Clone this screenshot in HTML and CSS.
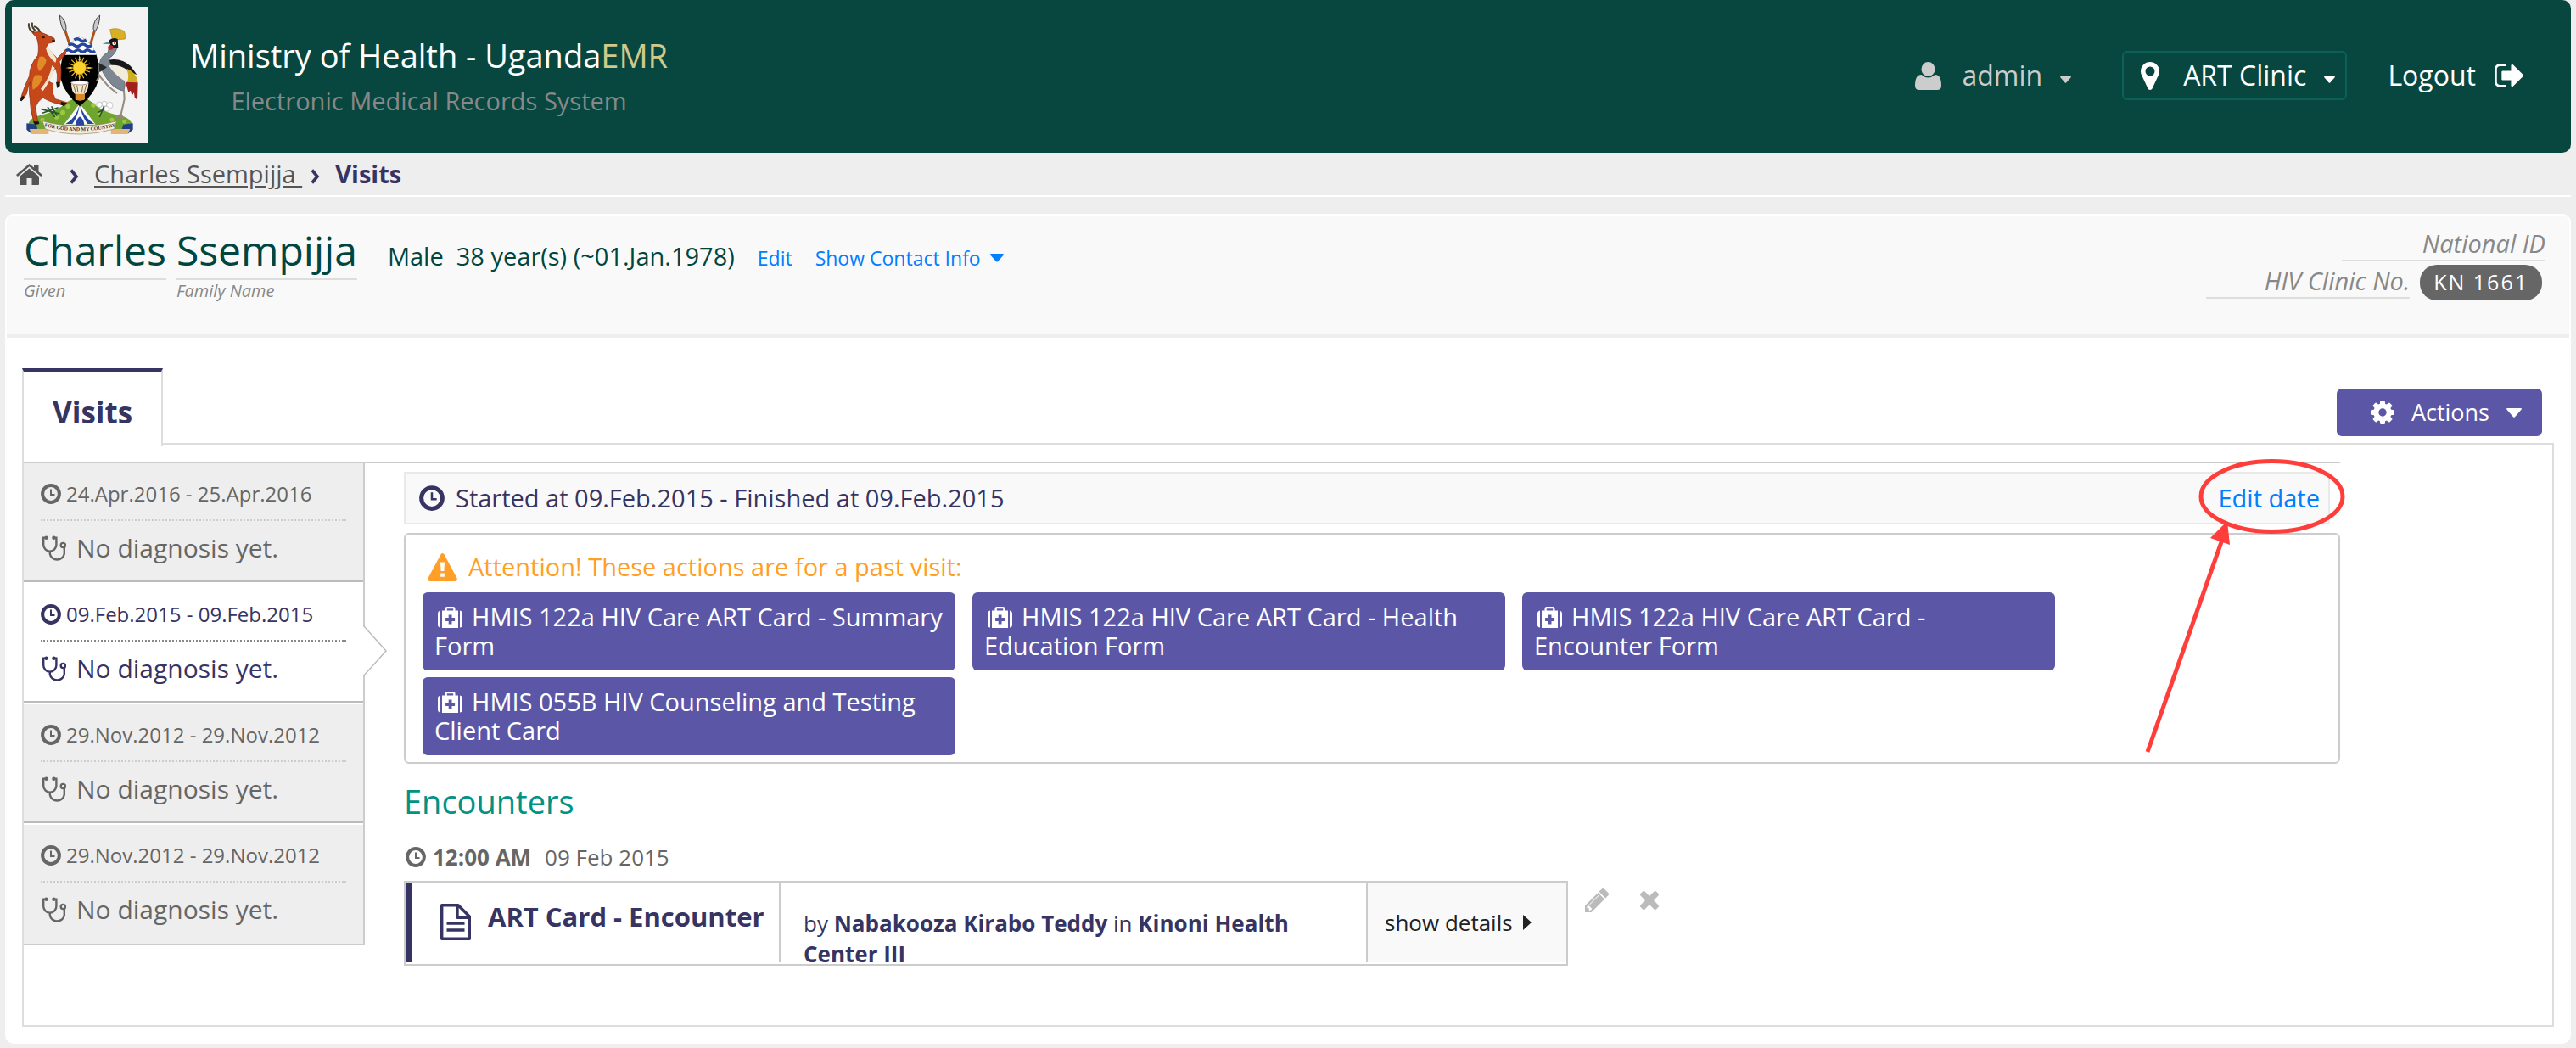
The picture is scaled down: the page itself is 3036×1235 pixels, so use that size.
FILE: index.html
```html
<!DOCTYPE html>
<html lang="en">
<head>
<meta charset="utf-8">
<title>Ministry of Health - UgandaEMR</title>
<link rel="stylesheet" href="styles.css">
</head>
<body>
<svg class="sprite" aria-hidden="true">
  <symbol id="i-clock" viewBox="0 0 24 24"><circle cx="12" cy="12" r="9.9" fill="none" stroke="currentColor" stroke-width="4"/><path d="M12 6.5V13H16.5" fill="none" stroke="currentColor" stroke-width="2"/></symbol>
  <symbol id="i-steth" viewBox="0 0 30 31"><g fill="none" stroke="currentColor" stroke-width="2.4"><path d="M6 2.6H3.2V11a7.6 7.6 0 0 0 15.200 0V2.600H15.600"/><path d="M10.800 19v2.500a8.600 8.200 0 0 0 17 0V14"/><circle cx="26.300" cy="11.500" r="2.600"/></g><circle cx="6.500" cy="2.800" r="2.200" fill="currentColor"/><circle cx="15.400" cy="2.800" r="2.200" fill="currentColor"/></symbol>
  <symbol id="i-medkit" viewBox="0 0 29 25"><path fill="currentColor" fill-rule="evenodd" d="M0 8q0-3 3-3.500V24.500Q0 24 0 21.500zM29 8q0-3-3-3.500V24.500q3-.5 3-3zM5 4.500H8.500V2.500Q8.500 0 11 0h7q2.500 0 2.500 2.500v2H24V25H5zM10.800 4.500h7.400V2.300h-7.400zM12.700 9.500v3.600H9.100v3.800h3.600v3.600h3.800v-3.600h3.600v-3.800h-3.600V9.500z"/></symbol>
  <symbol id="i-down" viewBox="0 0 18 11"><path fill="currentColor" d="M1 0H17Q18.500 .5 17.500 1.800L10 10.200Q9 11.200 8 10.200L.5 1.800Q-.5 .5 1 0z"/></symbol>
  <symbol id="i-chevron" viewBox="0 0 11 18"><path fill="none" stroke="currentColor" stroke-width="3.600" d="M1.800 1.500 8 9l-6.200 7.500"/></symbol>
</svg>

<header class="topbar">
  <svg class="crest" viewBox="42 24 480 480" role="img" aria-label="Coat of arms of Uganda">
    <!-- spears -->
    <g stroke="#a8541f" stroke-width="9"><path d="M228 100 322 398M337 100 246 398"/></g>
    <path d="M211 54q24 18 23 50l-7 6q-14-18-16-56zM353 54q-24 18-23 50l7 6q14-18 16-56z" fill="#c9c9cd" stroke="#444" stroke-width="3"/>
    <!-- mound -->
    <path d="M98 446Q104 414 142 408 192 396 224 372 246 348 282 348 318 348 342 376 376 400 420 408 462 414 468 444L430 456H136z" fill="#6fa52e"/>
    <g fill="#9cc93f"><circle cx="222" cy="398" r="9"/><circle cx="240" cy="376" r="8"/><circle cx="200" cy="414" r="8"/><circle cx="330" cy="372" r="8"/><circle cx="352" cy="400" r="9"/><circle cx="396" cy="424" r="8"/><circle cx="150" cy="424" r="8"/><circle cx="440" cy="430" r="7"/></g>
    <path d="M146 386l64 16M150 400l56-20M168 378l26 36M182 376l20 34M344 398l44-20M352 414l18-44" stroke="#27552a" stroke-width="5"/>
    <g fill="#fff" stroke="#999" stroke-width="1.500"><circle cx="351" cy="370" r="10"/><circle cx="369" cy="367" r="9"/><circle cx="388" cy="372" r="11"/><circle cx="377" cy="385" r="9"/></g>
    <path d="M282 366 226 440h112z" fill="#fff"/><path d="M282 366q-10 50-50 72h24q22-30 26-72 4 42 28 72h24q-40-24-52-72z" fill="#2746a0"/><path d="M282 412q-14 10-14 34h30q0-24-16-34z" fill="#2746a0"/>
    <!-- shield -->
    <path d="M283 128Q325 150 341 194 353 236 349 280 337 330 282 376 227 330 215 280 211 236 223 194 241 150 283 128z" fill="#000"/>
    <path d="M283 128Q325 150 341 194H223Q241 150 283 128z" fill="#fff"/>
    <g fill="none" stroke="#2746a0" stroke-width="10"><path d="M262 141q11-8 21 0t22 0"/><path d="M243 160q10-8 20 0t20 0 20 0 22 0"/><path d="M232 180q9-8 18 0t17 0 17 0 17 0 17 0 18 0"/></g>
    <g stroke="#f5c52a" stroke-width="3.500"><path d="M281 200v80M241 240h80M253 212l56 56M309 212l-56 56M266 203l30 74M296 203l-30 74M244 225l74 30M318 225l-74 30"/></g>
    <path d="M281 194l4 20h-8zM281 286l4-20h-8zM232 240l22-4v8zM332 240l-22-4v8z" fill="#f5c52a"/>
    <circle cx="281" cy="240" r="23" fill="#fbd12e" stroke="#c88a12" stroke-width="2"/>
    <path d="M252 294q0 34 16 40v20h28v-20q16-6 17-40z" fill="#f2ead2"/><path d="M266 332h34v20q-17 8-34 0z" fill="#d9892a"/><path d="M260 300l8 30M272 302l4 26M293 302l-4 26M305 300l-8 30" stroke="#8a6a3a" stroke-width="3"/><ellipse cx="282" cy="293" rx="31" ry="7" fill="#fff" stroke="#a98" stroke-width="3"/>
    <!-- antelope -->
    <path d="M122 116Q98 106 102 82M130 112Q110 100 114 80M142 116Q138 98 120 94" fill="none" stroke="#4a4030" stroke-width="6"/>
    <path d="M114 116 140 112 168 124 192 136 194 148 170 154 166 164Q182 186 202 206L230 178 234 188 210 218Q222 250 212 292L202 290Q206 262 196 240 180 262 172 288L188 296 186 328 196 350 236 362 230 372Q186 366 152 346 130 360 126 382L134 432 120 432Q106 390 106 350 100 312 107 290 98 310 94 332L80 352 73 350Q82 316 104 268 104 230 134 196 140 160 130 134z" fill="#c6471a" stroke="#7d2a0e" stroke-width="2"/>
    <path d="M140 200Q160 196 164 214 160 236 140 252 124 236 140 200zM122 268Q140 260 150 272 144 302 116 318 110 290 122 268z" fill="#e08a28"/>
    <path d="M184 232 194 240Q184 276 152 322L144 314Q176 276 184 232zM168 162Q186 186 200 208L196 222Q168 200 162 170z" fill="#f2e6d2"/>
    <path d="M72 356q0-14 10-18l6 8-12 12zM198 290h14v14l-10 8zM216 360l20 4-10 12-12-6zM117 430h20l2 8-16 4zM148 130h10v5h-10zM184 142h10v6h-10z" fill="#1b1512"/>
    <!-- crane -->
    <path d="M398 142 389 104q26-8 50 6 6 14 3 28z" fill="#d8b023" stroke="#a5830f" stroke-width="2"/>
    <path d="M384 212Q430 204 462 234L484 264 446 250 386 234z" fill="#17171a"/>
    <path d="M448 242Q482 254 488 292L444 290Q452 264 448 242z" fill="#cfae22"/><path d="M444 290 488 292 486 354 476 344 474 328 466 338 462 320 454 326z" fill="#a31f1c"/>
    <path d="M386 160 414 168Q408 192 386 206 384 222 402 236 440 262 442 300L438 322Q410 316 392 296 360 260 352 226 354 200 382 184z" fill="#7d8791" stroke="#4b545c" stroke-width="2"/>
    <path d="M384 232Q418 226 448 246 458 268 450 290 414 276 384 232z" fill="#f3ecdc"/>
    <path d="M384 144Q398 130 416 138L418 170 394 168z" fill="#17171a"/><path d="M362 155l22-8 4 10z" fill="#5f8f98"/><circle cx="404" cy="153" r="7" fill="#fff"/><circle cx="405" cy="153" r="3" fill="#c01818"/><ellipse cx="391" cy="168" rx="9" ry="8" fill="#c9181c"/>
    <path d="M346 262 384 306 414 330M438 320 440 350 428 404M428 402l-18 16M428 404l10 18M428 404l-4 20M342 286l12-22" fill="none" stroke="#958a7c" stroke-width="6"/>
    <path d="M348 222l30 16-26 18z" fill="#26282b"/>
    <!-- motto ribbon -->
    <path d="M94 436l34 4 8 26-26 6-16-14zM470 436l-34 4-8 26 26 6 16-14z" fill="#1f3f86"/><path d="M104 456h68v18h-60zM460 456h-68v18h60z" fill="#e3b577"/>
    <path d="M150 428q66 18 130 16 68 2 132-16l-8 28q-60 18-122 18-66 0-122-18z" fill="#f4ecda" stroke="#8d8069" stroke-width="2"/>
    <path id="motto" d="M157 447q64 16 125 16 64 0 127-16" fill="none"/>
    <text class="motto"><textPath href="#motto">FOR GOD AND MY COUNTRY</textPath></text>
  </svg>
  <div class="brand">
    <div class="brand-title">Ministry of Health - Uganda<span class="brand-emr">EMR</span></div>
    <div class="brand-sub">Electronic Medical Records System</div>
  </div>
  <nav class="user-nav">
    <button class="nav-item nav-user" type="button">
      <svg class="i-user" viewBox="0 0 31 33"><ellipse cx="15.500" cy="8.500" rx="8" ry="8.500" fill="currentColor"/><path fill="currentColor" d="M7.500 15Q15.500 22 23.500 15q7.500 0 7.500 13 0 5-5 5H5q-5 0-5-5 0-13 7.500-13z"/></svg>
      <span>admin</span>
      <svg class="caret-sm"><use href="#i-down"/></svg>
    </button>
    <button class="nav-item nav-place" type="button">
      <svg class="i-pin" viewBox="384 128 1024 1536"><path fill="currentColor" d="M1152 640q0-106-75-181t-181-75-181 75-75 181 75 181 181 75 181-75 75-181zm256 0q0 109-33 179l-364 774q-16 33-47.500 52t-67.500 19-67.500-19-46.500-52l-365-774q-33-70-33-179 0-212 150-362t362-150 362 150 150 362z"/></svg>
      <span>ART Clinic</span>
      <svg class="caret-sm"><use href="#i-down"/></svg>
    </button>
    <a class="nav-item nav-logout" href="#">Logout
      <svg class="i-out" viewBox="64 256 1568 1280"><path fill="currentColor" d="M704 1440q0 4 1 20t.5 26.500-3 23.500-10 19.500-20.500 6.500h-320q-119 0-203.500-84.500t-84.500-203.500v-704q0-119 84.500-203.500t203.500-84.500h320q13 0 22.500 9.500t9.500 22.500q0 4 1 20t.5 26.500-3 23.500-10 19.500-20.500 6.500h-320q-66 0-113 47t-47 113v704q0 66 47 113t113 47h312l11.500 1 11.500 3 8 5.500 7 9 2 13.500zm928-544q0 26-19 45l-544 544q-19 19-45 19t-45-19-19-45v-288h-448q-26 0-45-19t-19-45v-384q0-26 19-45t45-19h448v-288q0-26 19-45t45-19 45 19l544 544q19 19 19 45z"/></svg>
    </a>
  </nav>
</header>

<nav class="crumbs" aria-label="Breadcrumb">
  <a class="crumb-home" href="#" aria-label="Home"><svg viewBox="0 0 31 25"><path fill="currentColor" d="M15.500 5.500 27 15v9q0 1-1 1h-7.500v-8h-6v8H5q-1 0-1-1v-9zM15.500 0 21 4.600V1h5.500v8.200L31 13l-1.800 2L15.500 3.300 1.800 15 0 13z"/></svg></a>
  <svg class="crumb-sep"><use href="#i-chevron"/></svg>
  <a class="crumb-link" href="#">Charles Ssempijja&nbsp;</a>
  <svg class="crumb-sep"><use href="#i-chevron"/></svg>
  <span class="crumb-here">Visits</span>
</nav>

<main class="card">
  <section class="patient">
    <div class="who">
      <div class="name"><span class="name-text">Charles</span><span class="name-label">Given</span></div>
      <div class="name"><span class="name-text">Ssempijja</span><span class="name-label">Family Name</span></div>
      <div class="demo">Male&nbsp; 38 year(s) (~01.Jan.1978)</div>
      <a class="who-link" href="#">Edit</a>
      <a class="who-link" href="#">Show Contact Info <svg class="caret-md"><use href="#i-down"/></svg></a>
    </div>
    <div class="ids">
      <div class="id-row"><em class="id-label">National ID</em></div>
      <div class="id-row"><em class="id-label">HIV Clinic No.</em><span class="id-pill">KN 1661</span></div>
    </div>
  </section>

  <div class="tabs">
    <a class="tab" href="#visits">Visits</a>
    <button class="actions-btn" type="button">
      <svg class="i-cog" viewBox="128 128 1536 1536"><path fill="currentColor" d="M1152 896q0-106-75-181t-181-75-181 75-75 181 75 181 181 75 181-75 75-181zm512-109v222q0 12-8 23t-20 13l-185 28q-19 54-39 91 35 50 107 138 10 12 10 25t-9 23q-27 37-99 108t-94 71q-12 0-26-9l-138-108q-44 23-91 38-16 136-29 186-7 28-36 28h-222q-14 0-24.500-8.500t-11.500-21.500l-28-184q-49-16-90-37l-141 107q-10 9-25 9-14 0-25-11-126-114-165-168-7-10-7-23 0-12 8-23 15-21 51-66.500t54-70.500q-27-50-41-99l-183-27q-13-2-21-12.500t-8-23.500v-222q0-12 8-23t19-13l186-28q14-46 39-92-40-57-107-138-10-12-10-24 0-10 9-23 26-36 98.500-107.500t94.500-71.500q13 0 26 10l138 107q44-23 91-38 16-136 29-186 7-28 36-28h222q14 0 24.500 8.500t11.500 21.500l28 184q49 16 90 37l142-107q9-9 24-9 13 0 25 10 129 119 165 170 7 8 7 22 0 12-8 23-15 21-51 66.500t-54 70.500q26 50 41 98l183 28q13 2 21 12.500t8 23.500z"/></svg>
      <span>Actions</span>
      <svg class="caret-lg"><use href="#i-down"/></svg>
    </button>
  </div>

  <section class="panel" id="visits">
    <div class="visits">
      <ul class="visit-list">
        <li class="visit">
          <div class="visit-date"><svg class="clock"><use href="#i-clock"/></svg>24.Apr.2016 - 25.Apr.2016</div>
          <div class="visit-dx"><svg class="steth"><use href="#i-steth"/></svg>No diagnosis yet.</div>
        </li>
        <li class="visit visit-active">
          <div class="visit-date"><svg class="clock"><use href="#i-clock"/></svg>09.Feb.2015 - 09.Feb.2015</div>
          <div class="visit-dx"><svg class="steth"><use href="#i-steth"/></svg>No diagnosis yet.</div>
          <svg class="visit-arrow" viewBox="0 0 28 62"><path d="M0 1 27 31 0 61" fill="#fff" stroke="#bbb" stroke-width="1.500"/></svg>
        </li>
        <li class="visit">
          <div class="visit-date"><svg class="clock"><use href="#i-clock"/></svg>29.Nov.2012 - 29.Nov.2012</div>
          <div class="visit-dx"><svg class="steth"><use href="#i-steth"/></svg>No diagnosis yet.</div>
        </li>
        <li class="visit">
          <div class="visit-date"><svg class="clock"><use href="#i-clock"/></svg>29.Nov.2012 - 29.Nov.2012</div>
          <div class="visit-dx"><svg class="steth"><use href="#i-steth"/></svg>No diagnosis yet.</div>
        </li>
      </ul>

      <div class="detail">
        <div class="status">
          <svg class="clock-lg"><use href="#i-clock"/></svg>
          <span>Started at 09.Feb.2015 - Finished at 09.Feb.2015</span>
          <a class="edit-date" href="#">Edit date</a>
        </div>

        <div class="past">
          <p class="warn">
            <svg class="i-warn" viewBox="0 0 35 33"><path fill="currentColor" fill-rule="evenodd" d="M15.500 1.200q2-2.400 4 0L34.600 29.500Q35.500 32.500 32.500 33H2.500Q-.5 32.500 .4 29.500zM15 10.500l.6 10.500h3.800l.6-10.500zM15.200 23.500v4.300h4.600v-4.300z"/></svg>
            Attention! These actions are for a past visit:
          </p>
          <div class="forms">
            <button class="form-btn" type="button"><svg class="medkit"><use href="#i-medkit"/></svg>HMIS 122a HIV Care ART Card - Summary Form</button>
            <button class="form-btn" type="button"><svg class="medkit"><use href="#i-medkit"/></svg>HMIS 122a HIV Care ART Card - Health Education Form</button>
            <button class="form-btn" type="button"><svg class="medkit"><use href="#i-medkit"/></svg>HMIS 122a HIV Care ART Card - Encounter Form</button>
            <button class="form-btn" type="button"><svg class="medkit"><use href="#i-medkit"/></svg>HMIS 055B HIV Counseling and Testing Client Card</button>
          </div>
        </div>

        <h2 class="enc-heading">Encounters</h2>
        <div class="enc-time"><svg class="clock"><use href="#i-clock"/></svg><strong>12:00 AM</strong><span>09 Feb 2015</span></div>
        <div class="enc-row">
          <article class="enc">
            <div class="enc-title">
              <svg class="i-doc" viewBox="0 0 36 43"><g fill="none" stroke="currentColor" stroke-width="3.400"><path d="M1.700 1.700H21L34.300 15V41.300H1.700zM20 1.700V16.300H34.300" stroke-linejoin="round"/><path d="M7.500 23h21M7.500 31h21"/></g></svg>
              <strong>ART Card - Encounter</strong>
            </div>
            <p class="enc-by">by <strong>Nabakooza Kirabo Teddy</strong> in <strong>Kinoni Health Center III</strong></p>
            <button class="enc-show" type="button">show details <svg class="caret-right" viewBox="0 0 10 18"><path fill="currentColor" d="M0 0 10 9 0 18z"/></svg></button>
          </article>
          <button class="icon-btn" type="button" aria-label="Edit encounter"><svg class="i-pencil" viewBox="128 149 1515 1515"><path fill="currentColor" d="M491 1536l91-91-235-235-91 91v107h128v128h107zm523-928q0-22-22-22-10 0-17 7l-542 542q-7 7-7 17 0 22 22 22 10 0 17-7l542-542q7-7 7-17zm-54-192l416 416-832 832h-416v-416zm683 96q0 53-37 90l-166 166-416-416 166-165q36-38 90-38 53 0 91 38l235 234q37 39 37 91z"/></svg></button>
          <button class="icon-btn" type="button" aria-label="Delete encounter"><svg class="i-times" viewBox="302 366 1188 1188"><path fill="currentColor" d="M1490 1322q0 40-28 68l-136 136q-28 28-68 28t-68-28l-294-294-294 294q-28 28-68 28t-68-28l-136-136q-28-28-28-68t28-68l294-294-294-294q-28-28-28-68t28-68l136-136q28-28 68-28t68 28l294 294 294-294q28-28 68-28t68 28l136 136q28 28 28 68t-28 68l-294 294 294 294q28 28 28 68z"/></svg></button>
        </div>

        <!-- callout drawn over the edit link -->
        <svg class="callout" viewBox="0 0 240 350" aria-hidden="true"><ellipse cx="153.500" cy="45" rx="83.500" ry="41.500" fill="none" stroke="#ff3e3b" stroke-width="5"/><path d="M7 346 95 96" stroke="#ff3e3b" stroke-width="5"/><path d="M101 74 81 94l23 8z" fill="#ff3e3b"/></svg>
      </div>
    </div>
  </section>
</main>
</body>
</html>
```

FILE: styles.css
```css
*, *::before, *::after { box-sizing: border-box; }

body {
  margin: 0;
  padding: 0 6px 5px;
  background: #eee;
  color: #363463;
  font-family: "Open Sans", "Noto Sans", sans-serif;
  font-size: 29px;
  line-height: 40px;
}

a { color: #007fff; text-decoration: none; }
button { font: inherit; color: inherit; border: 0; padding: 0; background: none; cursor: pointer; }
svg { display: block; flex: none; }
p, h2, ul { margin: 0; padding: 0; }
.sprite { position: absolute; width: 0; height: 0; }

/* Shared icon sizes */
.clock { width: 24px; height: 24px; }
.clock-lg { width: 30px; height: 30px; }
.steth { width: 30px; height: 31px; }
.caret-sm { width: 13px; height: 8px; }
.caret-md { width: 16px; height: 10px; }
.caret-lg { width: 18px; height: 11px; }

/* Top bar */
.topbar {
  display: flex;
  align-items: flex-start;
  padding: 8px 56px 12px 8px;
  border-radius: 10px;
  background: #07473f;
  color: #fff;
}
.crest { width: 160px; height: 160px; background: #f3f3f3; }
.motto { font: bold 18px "Liberation Serif", serif; fill: #333; }
.brand { margin: 31px 0 0 50px; text-align: center; }
.brand-title { font-size: 38px; line-height: 52px; margin-bottom: 8px; }
.brand-emr { color: #d1c98b; }
.brand-sub { color: #888; }
.user-nav { display: flex; align-items: center; margin: 52px 0 0 auto; font-size: 32px; }
.nav-item { display: flex; align-items: center; color: #fff; }
.nav-item .caret-sm { margin: 10px 0 0 21px; }
.nav-user { color: #ccc; margin-right: 60px; }
.i-user { width: 31px; height: 33px; margin-right: 24px; }
.nav-place {
  height: 58px;
  padding: 0 12px 0 20px;
  border: 2px solid #0c6156;
  border-radius: 6px;
}
.i-pin { width: 22px; height: 33px; margin-right: 28px; }
.nav-logout { margin-left: 48px; gap: 22px; }
.i-out { width: 34px; height: 28px; }

/* Breadcrumb */
.crumbs {
  display: flex;
  align-items: center;
  padding: 5px 13px;
  border-bottom: 2px solid #fff;
  margin-bottom: 20px;
}
.crumbs a { color: #555; }
.crumb-home svg { width: 31px; height: 25px; }
.crumb-sep { width: 11px; height: 18px; margin-top: 6px; }
.crumb-home { margin-right: 32px; }
.crumb-link { margin: 0 10px 0 18px; text-decoration: underline !important; text-decoration-thickness: 2px; text-underline-offset: 3px; }
.crumb-here { margin-left: 18px; font-weight: 700; }

/* Card */
.card { border: 2px solid #fff; border-radius: 10px; background: #fff; padding-bottom: 18px; }
.patient {
  display: flex;
  justify-content: space-between;
  align-items: flex-start;
  padding: 8px 28px 38px 20px;
  border-bottom: 4px solid #eee;
  border-radius: 8px 8px 0 0;
  background: #f9f9f9;
  color: #00463f;
}
.who { display: flex; align-items: baseline; }
.name { display: flex; flex-direction: column; margin-right: 12px; }
.name-text { font-size: 48px; line-height: 66px; border-bottom: 2px solid #ddd; }
.name-label { font-size: 20px; line-height: 26px; font-style: italic; color: #888; }
.demo { margin-left: 24px; }
.who-link { display: flex; align-items: center; gap: 11px; margin-left: 27px; font-size: 23px; }
.ids { display: flex; flex-direction: column; align-items: flex-end; padding-top: 6px; }
.id-row { display: flex; align-items: flex-start; }
.id-row + .id-row { padding: 4px 4px 0 0; }
.id-label { width: 240px; border-bottom: 2px solid #ddd; text-align: right; line-height: 38px; color: #888; }
.id-pill {
  margin-left: 12px;
  padding: 0 16px 2px;
  border-radius: 20px;
  background: #666;
  color: #fff;
  font-size: 25px;
  font-weight: 500;
  letter-spacing: 2px;
}

/* Tabs */
.tabs { display: flex; align-items: flex-end; justify-content: space-between; margin: 36px 18px 0; }
.tab {
  position: relative;
  margin-bottom: -4px;
  padding: 24px 34px 16px;
  border: 2px solid #ddd;
  border-top: 4px solid #363463;
  border-bottom: 0;
  background: #fff;
  color: #363463;
  font-size: 35px;
  line-height: 48px;
  font-weight: 700;
}
.actions-btn {
  display: flex;
  align-items: center;
  height: 56px;
  margin: 0 14px 8px 0;
  padding: 0 24px 0 40px;
  border-radius: 6px;
  background: #5b57a6;
  color: #fff;
  font-size: 27px;
  gap: 20px;
}
.i-cog { width: 28px; height: 28px; }
.panel { margin: 0 18px; padding: 20px 250px 70px 0; border: 2px solid #ddd; }
.visits { display: flex; align-items: flex-start; border-top: 2px solid #ccc; }

/* Visit list */
.visit-list {
  flex: none;
  width: 402px;
  list-style: none;
  border: solid #ccc;
  border-width: 0 2px 2px 0;
}
.visit {
  position: relative;
  padding: 18px 20px 16px;
  border-bottom: 2px solid #bbb;
  background: #eee;
  color: #666;
}
.visit:last-child { border-bottom-color: #eee; }
.visit + .visit { border-top: 2px solid #fff; }
.visit-active { background: #fff; color: #363463; }
.visit-date {
  display: flex;
  align-items: center;
  gap: 6px;
  padding-bottom: 12px;
  border-bottom: 2px dotted #ccc;
  font-size: 24px;
  line-height: 36px;
}
.visit-active .visit-date { border-color: #888; }
.visit-dx { display: flex; align-items: center; gap: 12px; padding-top: 10px; font-size: 30px; line-height: 44px; }
.visit-arrow { position: absolute; top: 48px; right: -28px; width: 28px; height: 62px; }

/* Visit detail */
.detail { position: relative; flex: 1; min-width: 0; margin-left: 46px; }
.status {
  display: flex;
  align-items: center;
  gap: 13px;
  margin: 10px 12px 10px 0;
  padding: 0 10px 0 16px;
  border: 2px solid #e9e9e9;
  background: #f9f9f9;
  line-height: 58px;
}
.edit-date { margin-left: auto; }
.past { padding: 18px 20px 8px; border: 2px solid #ccc; border-radius: 6px; }
.warn { display: flex; align-items: center; gap: 13px; padding-left: 6px; color: #ff9f27; }
.i-warn { width: 35px; height: 33px; }
.forms { display: flex; flex-wrap: wrap; gap: 8px 20px; margin-top: 10px; }
.form-btn {
  flex: 0 1 628px;
  padding: 12px 14px;
  border-radius: 6px;
  background: #5b57a6;
  color: #fff;
  line-height: 34px;
  text-align: left;
}
.medkit { display: inline-block; width: 29px; height: 25px; margin: 0 11px 0 4px; vertical-align: -2px; }

/* Encounters */
.enc-heading { margin: 18px 0 22px; color: #009384; font-size: 38px; line-height: 52px; font-weight: 400; }
.enc-time { display: flex; align-items: center; margin: 0 0 10px 2px; color: #666; font-size: 26px; line-height: 36px; }
.enc-time strong { margin: 0 16px 0 8px; }
.enc-row { display: flex; align-items: flex-start; }
.enc {
  display: flex;
  flex: 0 1 1372px;
  height: 100px;
  padding-bottom: 2px;
  border: 2px solid #ccc;
  overflow: hidden;
  font-size: 26px;
  line-height: 36px;
}
.enc-title {
  display: flex;
  align-items: flex-start;
  flex: 0 0 442px;
  padding: 18px 0 0 33px;
  border-left: 8px solid #363463;
  border-right: 2px solid #ccc;
  font-size: 31px;
  line-height: 44px;
}
.i-doc { width: 36px; height: 43px; margin: 7px 20px 0 0; }
.enc-by { flex: 1; padding: 30px 30px 0 27px; overflow: hidden; }
.enc-show {
  display: flex;
  align-items: center;
  flex: 0 0 236px;
  gap: 12px;
  padding-left: 20px;
  border-left: 2px solid #ccc;
  background: #f9f9f9;
  color: #222;
}
.caret-right { width: 10px; height: 18px; }
.icon-btn { display: flex; align-items: center; height: 28px; margin: 9px 17px 0 20px; color: #bbb; }
.i-pencil { width: 28px; height: 28px; }
.i-times { width: 22px; height: 22px; }

.callout { position: absolute; top: -6px; right: -6px; width: 240px; height: 350px; pointer-events: none; }
```
